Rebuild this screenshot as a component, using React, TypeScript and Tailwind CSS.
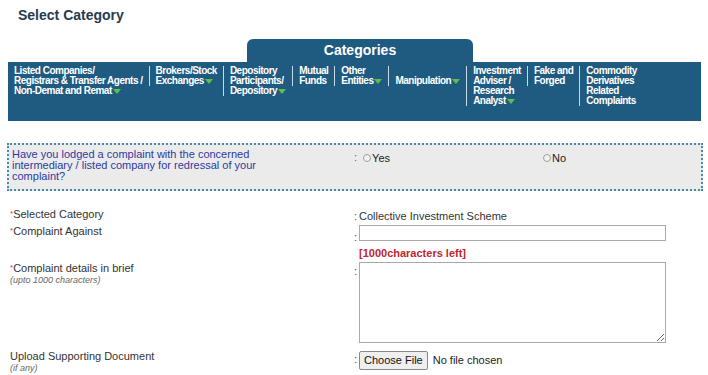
import React from 'react'

const NAV = [
  { lines: ['Listed Companies/', 'Registrars & Transfer Agents /', 'Non-Demat and Remat'], arrow: true },
  { lines: ['Brokers/Stock', 'Exchanges'], arrow: true },
  { lines: ['Depository', 'Participants/', 'Depository'], arrow: true },
  { lines: ['Mutual', 'Funds'], arrow: false },
  { lines: ['Other', 'Entities'], arrow: true },
  { lines: ['', 'Manipulation'], arrow: true },
  { lines: ['Investment', 'Adviser /', 'Research', 'Analyst'], arrow: true },
  { lines: ['Fake and', 'Forged'], arrow: false },
  { lines: ['Commodity', 'Derivatives', 'Related', 'Complaints'], arrow: false },
]

function Arrow() {
  return (
    <svg width="8" height="5" viewBox="0 0 8 5" className="ml-[1px] inline-block align-middle">
      <path d="M0 0 L8 0 L4 5 Z" fill="#5cc04a" />
    </svg>
  )
}

function NavItem({ lines, arrow, first }: { lines: string[]; arrow: boolean; first: boolean }) {
  return (
    <div
      className={
        'whitespace-nowrap px-[6px] text-[10px] leading-[10px] font-bold tracking-[-0.5px] text-white ' +
        (first ? '' : 'border-l border-[#c8d8e4]')
      }
    >
      {lines.map((l, i) => (
        <div key={i} className="h-[10px]">
          {l}
          {arrow && i === lines.length - 1 && <Arrow />}
        </div>
      ))}
    </div>
  )
}

function Radio({ label }: { label: string }) {
  return (
    <span className="inline-flex items-center">
      <span className="inline-block h-[8px] w-[8px] rounded-full border border-[#a0a0a0] bg-[#f2f2f2]" />
      <span className="ml-[1px] text-[#222]">{label}</span>
    </span>
  )
}

function Label({ text, sub, req }: { text: string; sub?: string; req?: boolean }) {
  return (
    <div className="w-[354px] shrink-0 pl-[10px] text-[#333]">
      <div className="leading-[12px]">
        {req && <span className="align-top text-[8px] text-[#d03a3a]">*</span>}
        {text}
      </div>
      {sub && <div className="mt-[1px] text-[9px] leading-[10px] text-[#666] italic">{sub}</div>}
    </div>
  )
}

export default function App() {
  return (
    <div className="h-[375px] w-[708px] overflow-hidden bg-white font-['Liberation_Sans',Arial,sans-serif] text-[11px]">
      <h1 className="pt-[7px] pl-[18px] text-[14px] leading-[16px] font-bold text-[#263b4f]">
        Select Category
      </h1>

      <div className="mt-[16px] pl-[247px]">
        <div className="flex h-[23px] w-[226px] items-center justify-center rounded-t-[6px] bg-[#1f5a80] text-[14px] font-bold text-white">
          Categories
        </div>
      </div>

      <div className="mr-[7px] ml-[8px] flex h-[59px] items-start bg-[#1f5a80] pt-[4px]">
        {NAV.map((n, i) => (
          <NavItem key={i} lines={n.lines} arrow={n.arrow} first={i === 0} />
        ))}
      </div>

      <div className="mt-[22px] mr-[5px] ml-[7px] flex h-[48px] border-2 border-dotted border-[#4a8aa5] bg-[#ebebeb] pt-[4px]">
        <div className="w-[345px] shrink-0 pl-[3px] leading-[11px] text-[#2b3aa0]">
          Have you lodged a complaint with the concerned
          <br />
          intermediary / listed company for redressal of your
          <br />
          complaint?
        </div>
        <div className="flex items-start text-[#666]">
          <span className="mr-[6px]">:</span>
          <span className="mt-[1px] w-[180px]">
            <Radio label="Yes" />
          </span>
          <span className="mt-[1px]">
            <Radio label="No" />
          </span>
        </div>
      </div>

      <div className="mt-[17px] flex flex-col">
        <div className="flex h-[17px]">
          <Label text="Selected Category" req />
          <span className="w-[5px] text-[#555]">:</span>
          <span className="text-[#333]">Collective Investment Scheme</span>
        </div>
        <div className="flex h-[19px]">
          <Label text="Complaint Against" req />
          <span className="mt-[4px] w-[5px] text-[#555]">:</span>
          <input className="h-[16px] w-[307px] border border-[#a9a9a9] bg-white" />
        </div>
        <div className="flex h-[18px] items-center">
          <div className="w-[359px] shrink-0" />
          <span className="font-bold text-[#c0262c]">[1000characters left]</span>
        </div>
        <div className="flex h-[86px]">
          <Label text="Complaint details in brief" sub="(upto 1000 characters)" req />
          <span className="mt-[1px] w-[5px] text-[#555]">:</span>
          <textarea className="h-[81px] w-[307px] resize border border-[#a9a9a9] bg-white" />
        </div>
        <div className="flex">
          <div className="pt-[2px]">
            <Label text="Upload Supporting Document" sub="(if any)" />
          </div>
          <span className="mt-[3px] w-[5px] text-[#555]">:</span>
          <div className="flex items-center">
            <span className="rounded-[2px] border border-[#8a8a8a] bg-[#efefef] px-[4px] py-[2px] text-[11px] leading-[13px] text-[#111]">
              Choose File
            </span>
            <span className="ml-[5px] text-[#222]">No file chosen</span>
          </div>
        </div>
      </div>
    </div>
  )
}
